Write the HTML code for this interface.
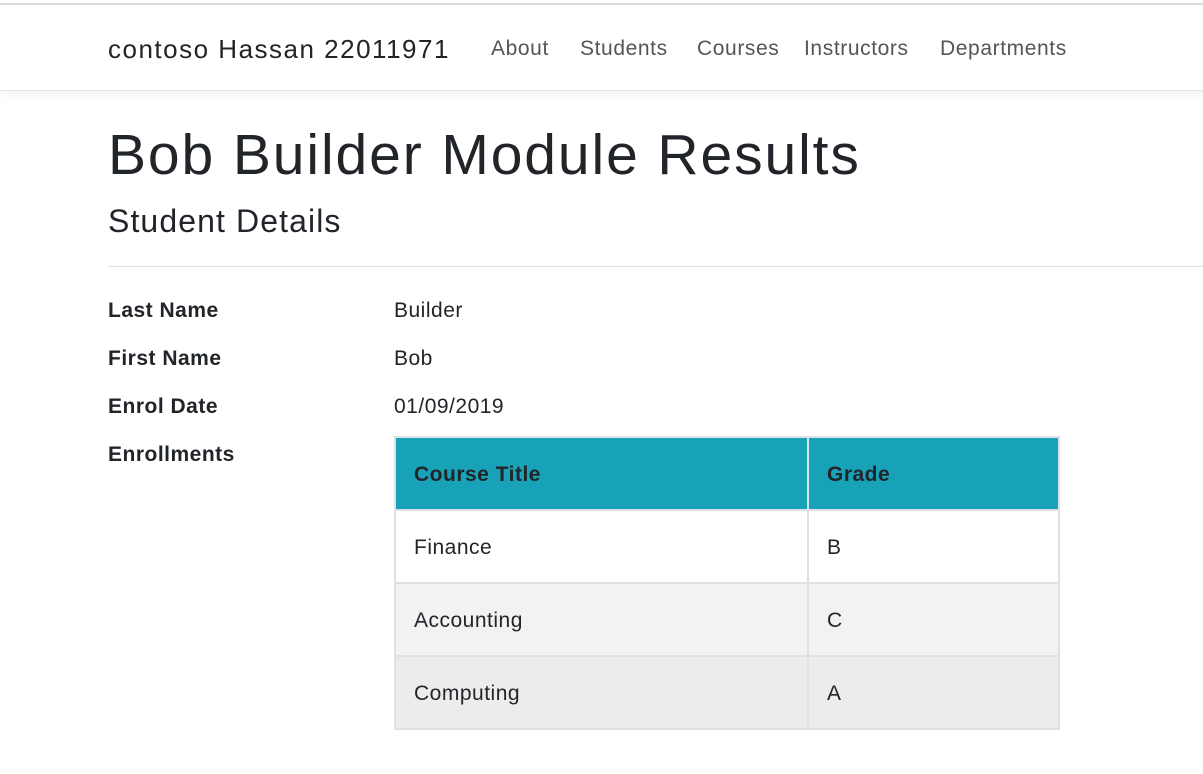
<!DOCTYPE html>
<html><head><meta charset="utf-8"><style>
*{margin:0;padding:0;box-sizing:border-box}
body{width:1203px;height:774px;background:#fff;font-family:"Liberation Sans",sans-serif;color:#212529;position:relative;overflow:hidden}
.topline{position:absolute;top:3px;left:0;width:1203px;height:2px;background:#dcdcdc}
.nav{position:absolute;top:5px;left:0;width:1203px;height:86px;border-bottom:1px solid #e3e3e3;box-shadow:0 3px 8px rgba(0,0,0,.05)}
.brand{position:absolute;left:108px;top:29px;font-size:26px;color:#212529;letter-spacing:1.5px}
.link{position:absolute;top:32px;font-size:21px;color:#555;letter-spacing:0.6px}
h1{position:absolute;left:108px;top:122px;font-size:57px;font-weight:500;letter-spacing:1.9px}
h2{position:absolute;left:108px;top:203px;font-size:32px;font-weight:normal;letter-spacing:1.1px}
.hr{position:absolute;left:108px;top:266px;width:1095px;height:1px;background:#e2e2e2}
.dt{position:absolute;left:108px;font-size:21px;font-weight:bold;letter-spacing:0.5px}
.dd{position:absolute;left:394px;font-size:21px;letter-spacing:0.5px}
table{position:absolute;left:394px;top:436px;width:666px;border-collapse:collapse;font-size:21px;letter-spacing:0.5px}
td,th{border:2px solid #dee2e6;height:73px;padding:2px 18px 0;text-align:left}
th{background:#17a2b8;font-weight:bold;height:73px}
tr.r2 td{background:#f2f2f2}
tr.r3 td{background:#ececec}
</style></head><body>
<div class="topline"></div>
<div class="nav">
<div class="brand">contoso Hassan 22011971</div>
<div class="link" style="left:491px">About</div>
<div class="link" style="left:580px">Students</div>
<div class="link" style="left:697px">Courses</div>
<div class="link" style="left:804px">Instructors</div>
<div class="link" style="left:940px">Departments</div>
</div>
<h1>Bob Builder Module Results</h1>
<h2>Student Details</h2>
<div class="hr"></div>
<div class="dt" style="top:299px">Last Name</div><div class="dd" style="top:299px">Builder</div>
<div class="dt" style="top:347px">First Name</div><div class="dd" style="top:347px">Bob</div>
<div class="dt" style="top:395px">Enrol Date</div><div class="dd" style="top:395px">01/09/2019</div>
<div class="dt" style="top:443px">Enrollments</div>
<table>
<tr><th style="width:413px">Course Title</th><th>Grade</th></tr>
<tr><td>Finance</td><td>B</td></tr>
<tr class="r2"><td>Accounting</td><td>C</td></tr>
<tr class="r3"><td>Computing</td><td>A</td></tr>
</table>
</body></html>
